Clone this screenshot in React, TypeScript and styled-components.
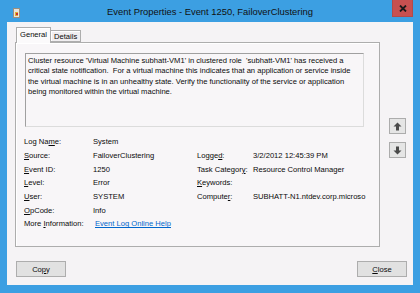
import * as React from "react";
import styled, { createGlobalStyle } from "styled-components";

const GlobalStyle = createGlobalStyle`
  body {
    margin: 0;
    font-family: "Liberation Sans", Arial, sans-serif;
  }
`;

const Frame = styled.div`
  width: 420px;
  height: 293px;
  box-sizing: border-box;
  background: #3c9fe2;
  padding: 0 7px 8px 7px;
  display: flex;
  flex-direction: column;
`;

const TitleBar = styled.div`
  height: 22px;
  display: grid;
  grid-template-columns: 1fr auto 1fr;
  align-items: start;
`;

const TitleIcon = styled.svg`
  margin: 8px 0 0 6px;
`;

const Title = styled.div`
  font-size: 9.4px;
  line-height: 24px;
  color: #111;
  white-space: nowrap;
`;

const CloseBox = styled.div`
  justify-self: end;
  width: 21px;
  height: 17px;
  background: #c75050;
  display: flex;
  align-items: center;
  justify-content: center;
  box-sizing: border-box;
  border: 1px solid #b04a4a;
  border-top: none;
`;

const Client = styled.div`
  flex: 1;
  background: #f5f3f5;
  display: flex;
  flex-direction: column;
  padding: 5px 6px 8px 8px;
  font-size: 7.6px;
  color: #0a0a0a;
`;

const Tabs = styled.div`
  display: flex;
  align-items: flex-end;
  height: 15px;
  margin-left: 1px;
  position: relative;
  z-index: 1;
`;

const Tab = styled.div<{ $active?: boolean }>`
  box-sizing: border-box;
  height: ${(p) => (p.$active ? 16 : 12)}px;
  padding: 0 3px;
  margin-bottom: ${(p) => (p.$active ? -1 : 0)}px;
  border: 1px solid #adadad;
  border-bottom: ${(p) => (p.$active ? "none" : "1px solid #adadad")};
  background: ${(p) => (p.$active ? "#fbfafb" : "#f0eef0")};
  box-shadow: inset 1px 1px 0 #ffffff;
  line-height: ${(p) => (p.$active ? 13 : 11)}px;
  ${(p) => (p.$active ? "" : "border-left: none;")}
`;

const Body = styled.div`
  display: flex;
  align-items: flex-start;
`;

const Panel = styled.div`
  width: 365px;
  height: 205px;
  box-sizing: border-box;
  border: 1px solid #adadad;
  box-shadow: inset 1px 1px 0 #ffffff;
  background: #f8f6f8;
  padding: 10px 16px 0 8px;
`;

const MessageBox = styled.div`
  margin-left: 1px;
  width: 339px;
  height: 74px;
  box-sizing: border-box;
  border: 1px solid #dcdcdc;
  border-top-color: #a0a0a0;
  border-left-color: #a0a0a0;
  padding: 2px 2px;
  line-height: 10.4px;
  background: #f8f6f8;
  white-space: nowrap;
`;

const Fields = styled.div`
  display: grid;
  grid-template-columns: 69px 104px 56px 116px;
  grid-auto-rows: 13.7px;
  align-items: center;
  margin-top: 8px;
`;

const Label = styled.div<{ $col?: number }>`
  grid-column: ${(p) => p.$col ?? 1};
  white-space: nowrap;
`;

const Value = styled.div<{ $col?: number }>`
  grid-column: ${(p) => p.$col ?? 2};
  white-space: nowrap;
`;

const Link = styled.a`
  grid-column: 2 / span 3;
  margin-left: 2px;
  color: #0066cc;
  text-decoration: underline;
  cursor: pointer;
`;

const Side = styled.div`
  margin-left: 9px;
  margin-top: 76px;
  display: flex;
  flex-direction: column;
  gap: 8px;
`;

const ArrowButton = styled.div`
  width: 17px;
  height: 16px;
  box-sizing: border-box;
  border: 1px solid #acacac;
  background: #e5e5e5;
  display: flex;
  align-items: center;
  justify-content: center;
`;

const Footer = styled.div`
  margin-top: auto;
  display: flex;
  justify-content: space-between;
  padding-left: 1px;
`;

const Button = styled.div`
  width: 50px;
  height: 16px;
  box-sizing: border-box;
  border: 1px solid #adadad;
  background: #e1e1e1;
  display: flex;
  align-items: center;
  justify-content: center;
`;

const U = styled.span`
  text-decoration: underline;
`;

const Arrow = ({ down }: { down?: boolean }) => (
  <svg width="9" height="9" viewBox="0 0 9 9" style={{ transform: down ? "rotate(180deg)" : undefined }}>
    <path d="M4.5 0.5 L8.5 4.5 L6 4.5 L6 8.5 L3 8.5 L3 4.5 L0.5 4.5 Z" fill="#4a4a4a" />
  </svg>
);

const rows: [React.ReactNode, React.ReactNode, React.ReactNode?, React.ReactNode?][] = [
  [<>Log Na<U>m</U>e:</>, "System"],
  [<><U>S</U>ource:</>, "FailoverClustering", <>Logge<U>d</U>:</>, "3/2/2012 12:45:39 PM"],
  [<><U>E</U>vent ID:</>, "1250", <>Task Categor<U>y</U>:</>, "Resource Control Manager"],
  [<><U>L</U>evel:</>, "Error", <><U>K</U>eywords:</>, ""],
  [<><U>U</U>ser:</>, "SYSTEM", <>Compute<U>r</U>:</>, "SUBHATT-N1.ntdev.corp.microso"],
  [<><U>O</U>pCode:</>, "Info"],
];

export default function App() {
  return (
    <>
      <GlobalStyle />
      <Frame>
        <TitleBar>
          <TitleIcon width="7" height="10" viewBox="0 0 7 10">
            <rect x="0.5" y="0.5" width="6" height="9" fill="#e8e4dc" stroke="#9a8f80" />
            <rect x="2" y="4" width="3" height="4" fill="#e0b030" />
            <rect x="3" y="5" width="2" height="2" fill="#c83030" />
          </TitleIcon>
          <Title>Event Properties - Event 1250, FailoverClustering</Title>
          <CloseBox>
            <svg width="8" height="7" viewBox="0 0 8 7">
              <path d="M1 0.5 L7 6.5 M7 0.5 L1 6.5" stroke="#1a1a1a" strokeWidth="1.8" />
            </svg>
          </CloseBox>
        </TitleBar>
        <Client>
          <Tabs>
            <Tab $active>General</Tab>
            <Tab>Details</Tab>
          </Tabs>
          <Body>
            <Panel>
              <MessageBox>
                Cluster resource 'Virtual Machine subhatt-VM1' in clustered role&nbsp; 'subhatt-VM1' has received a
                <br />
                critical state notification.&nbsp; For a virtual machine this indicates that an application or service inside
                <br />
                the virtual machine is in an unhealthy state. Verify the functionality of the service or application
                <br />
                being monitored within the virtual machine.
              </MessageBox>
              <Fields>
                {rows.map(([l1, v1, l2, v2], i) => (
                  <React.Fragment key={i}>
                    <Label>{l1}</Label>
                    <Value>{v1}</Value>
                    {l2 && <Label $col={3}>{l2}</Label>}
                    {l2 && <Value $col={4}>{v2}</Value>}
                  </React.Fragment>
                ))}
                <Label>
                  More <U>I</U>nformation:
                </Label>
                <Link>Event Log Online Help</Link>
              </Fields>
            </Panel>
            <Side>
              <ArrowButton>
                <Arrow />
              </ArrowButton>
              <ArrowButton>
                <Arrow down />
              </ArrowButton>
            </Side>
          </Body>
          <Footer>
            <Button>
              Co<U>p</U>y
            </Button>
            <Button>
              <U>C</U>lose
            </Button>
          </Footer>
        </Client>
      </Frame>
    </>
  );
}
